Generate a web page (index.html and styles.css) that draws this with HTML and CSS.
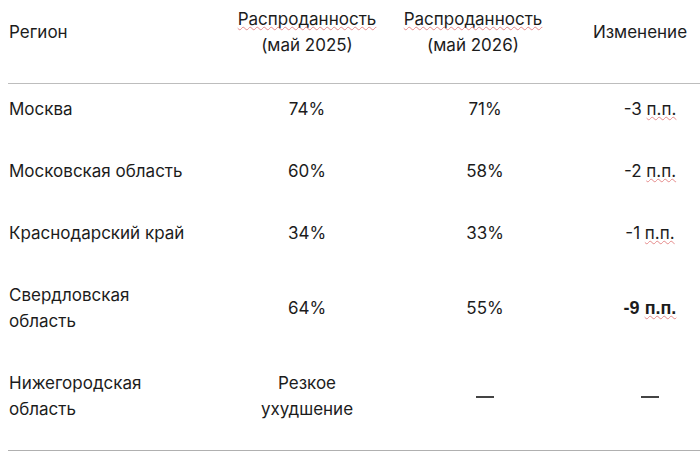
FILE: index.html
```html
<!DOCTYPE html>
<html lang="ru">
<head>
<meta charset="utf-8">
<link rel="stylesheet" href="styles.css">
</head>
<body>
<table class="grid">
  <colgroup>
    <col class="c1"><col class="c2"><col class="c3"><col class="c4">
  </colgroup>
  <thead>
    <tr>
      <th class="left">Регион</th>
      <th class="h2"><span class="sp">Распроданность</span><br>(май 2025)</th>
      <th class="h3"><span class="sp">Распроданность</span><br>(май 2026)</th>
      <th class="h4">Изменение</th>
    </tr>
  </thead>
  <tbody>
    <tr>
      <td class="left">Москва</td>
      <td>74%</td>
      <td class="b3">71%</td>
      <td class="b4">-3 <span class="sp">п.п.</span></td>
    </tr>
    <tr>
      <td class="left">Московская область</td>
      <td>60%</td>
      <td class="b3">58%</td>
      <td class="b4">-2 <span class="sp">п.п.</span></td>
    </tr>
    <tr>
      <td class="left">Краснодарский край</td>
      <td>34%</td>
      <td class="b3">33%</td>
      <td class="b4">-1 <span class="sp">п.п.</span></td>
    </tr>
    <tr>
      <td class="left">Свердловская<br>область</td>
      <td>64%</td>
      <td class="b3">55%</td>
      <td class="b4"><strong class="bold">-9 <span class="sp">п.п.</span></strong></td>
    </tr>
    <tr class="last">
      <td class="left">Нижегородская<br>область</td>
      <td>Резкое<br>ухудшение</td>
      <td class="b3"><span class="dash"></span></td>
      <td class="b4"><span class="dash"></span></td>
    </tr>
  </tbody>
</table>
</body>
</html>
```
FILE: styles.css
```css
html, body {
  margin: 0;
  padding: 0;
  background: #ffffff;
}
body {
  padding-left: 8px;
  font-family: Inter, "Noto Sans", sans-serif;
  font-size: 17px;
  line-height: 26px;
  color: #1c1c1c;
  overflow: hidden;
}
.grid {
  width: 692px;
  border-collapse: collapse;
  table-layout: fixed;
}
.c1 { width: 222px; }
.c2 { width: 154px; }
.c3 { width: 202px; }
.c4 { width: 114px; }
th {
  font-weight: 400;
  text-align: center;
  vertical-align: middle;
  padding: 6px 0 25px;
  border-bottom: 1px solid #bdbdbd;
  white-space: nowrap;
}
td {
  text-align: center;
  vertical-align: middle;
  padding: 12px 0 24px;
}
.left {
  text-align: left;
  padding-left: 1px;
}
.h3 { padding-right: 24px; }
.h4 { padding-right: 6px; }
.b3 { padding-left: 0; }
.b4 { padding-left: 14px; }
tr.last td {
  padding-bottom: 28px;
  border-bottom: 1px solid #b0b0b0;
}
.sp {
  text-decoration: underline wavy #e58a8a;
  text-decoration-thickness: 1px;
  text-underline-offset: 1px;
  text-decoration-skip-ink: none;
}
.bold {
  font-family: "Liberation Sans", Arial, sans-serif;
  font-weight: 700;
  font-size: 18px;
}
.dash {
  display: inline-block;
  width: 18px;
  height: 2px;
  background: #444;
  vertical-align: middle;
}
```
